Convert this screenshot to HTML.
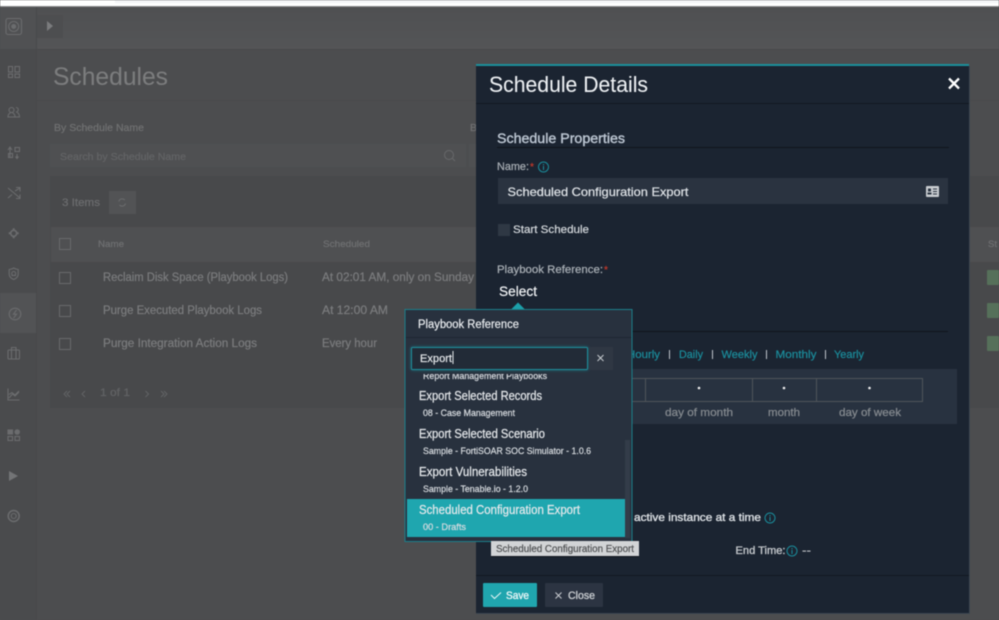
<!DOCTYPE html>
<html><head><meta charset="utf-8"><title>Schedules</title>
<style>
html,body{margin:0;padding:0;background:#4c4d4f;width:999px;height:620px;overflow:hidden}
svg{display:block;filter:blur(.4px)}
text{font-family:"Liberation Sans",sans-serif;white-space:pre;fill:currentColor;stroke:currentColor;stroke-width:.22px}
.ic{fill:none;stroke:#6b6c6e;stroke-width:1.1}
.bg text{color:#7b7c7e}
.l{color:#1b8c9b;font-size:11px}
.pt{color:#e6e9ec;font-size:12.5px}
.ps{color:#d8dce0;font-size:9.5px}
.thin{stroke-width:.05px}
</style></head><body>
<svg width="999" height="620" viewBox="0 0 999 620" xmlns="http://www.w3.org/2000/svg">
<defs>
<linearGradient id="hd" x1="0" y1="0" x2="0" y2="1"><stop offset="0" stop-color="#4f5052"/><stop offset="1" stop-color="#545557"/></linearGradient>
<clipPath id="lc"><rect x="407" y="374" width="218" height="170"/></clipPath>
<filter id="glow" x="-10%" y="-40%" width="120%" height="180%"><feGaussianBlur stdDeviation="1.5"/></filter>
</defs>
<!-- page -->
<rect width="999" height="620" fill="#4c4d4f"/>
<rect width="999" height="6" fill="#ffffff"/>
<rect x="115" y="0" width="884" height="3" fill="#f4f5f7"/>
<rect y="6" width="999" height="1" fill="#8a8b8d"/>
<rect y="7" width="999" height="42" fill="url(#hd)"/>
<rect y="49" width="999" height="1" fill="#48494b"/>
<rect x="36" y="7" width="1" height="613" fill="#48494b"/>
<rect y="7" width="36" height="613" fill="#4a4b4d"/>
<rect y="7" width="36" height="42" fill="#505153"/>
<rect x="37" y="15" width="26" height="23" fill="#4d4e50"/>
<path d="M47 21 L53 26 L47 31Z" fill="#7b7c7e"/>
<rect x="0" y="293" width="36" height="40" fill="#525355"/>
<rect y="100" x="37" width="962" height="1" fill="#49494b"/>

<!-- sidebar icons -->
<g class="ic">
<rect x="6" y="18.500" width="15.500" height="16" rx="2"/><circle cx="13.700" cy="26.500" r="5"/><circle cx="13.700" cy="26.500" r="2" fill="#6b6c6e"/>
<rect x="8.500" y="66.500" width="4" height="5.500"/><rect x="15" y="66.500" width="4.500" height="5.500"/><rect x="8.500" y="74" width="4" height="3.500"/><rect x="15" y="74" width="4.500" height="3.500"/>
<circle cx="11.500" cy="110" r="2.500"/><path d="M8 117c0-3 2-4.500 3.500-4.500s3.500 1.500 3.500 4.500zM16 107.500a2.200 2.200 0 1 1 0 4.500M17 112.500c1.500.5 2.500 2 2.500 4.500H15"/>
<path d="M10 158v-10M8 150l2-3 2 3"/><rect x="15" y="147.500" width="4.500" height="4"/><rect x="8.500" y="153.500" width="4" height="4"/><path d="M17 154v4M15.500 156.500l1.500 2 1.500-2"/>
<path d="M8 188l12 10M8 198l4-3.500M15 191l5-3M16 187.500h4v4M16 198.500h4v-4"/>
<circle cx="13.700" cy="233.300" r="3" stroke-width="1.600"/><path d="M13.700 228.300v1.500M13.700 236.800v1.500M8.700 233.300h1.500M17.200 233.300h1.500" stroke-width="2"/>
<path d="M13.700 268c2 1.200 3.800 1.500 4.500 1.500v4.500c0 2.700-2 4.500-4.500 5.500-2.500-1-4.500-2.800-4.500-5.500v-4.500c.7 0 2.500-.3 4.500-1.500z"/><circle cx="13.700" cy="273.500" r="2"/><path d="M11.500 275.500h4.500"/>
<circle cx="15" cy="314" r="5.800"/><path d="M16.500 310l-3 4.200h3l-3 4"/>
<rect x="8" y="350" width="11.500" height="9" rx="1"/><path d="M11.500 350v-2.500h4.500v2.500M11.500 350v9M16 350v9"/>
<path d="M8 388.500v11.500h11.500M9 398l3.500-4 2.500 2 4-4M9 394.500l3-2 3 2.500 4-4"/>
<rect x="8" y="430" width="4.500" height="4" fill="#6b6c6e"/><circle cx="17.200" cy="432" r="2.200" fill="#6b6c6e"/><rect x="8" y="436.500" width="4.500" height="4"/><rect x="15" y="436.500" width="4.500" height="4"/>
<path d="M9 471l9 5-9 5z" fill="#737476" stroke="none"/>
<circle cx="13.700" cy="516" r="5.500" stroke-width="1.500"/><circle cx="13.700" cy="516" r="2.500"/>
</g>

<!-- list page -->
<g class="bg">
<text class="thin" x="53" y="85" font-size="25" textLength="115" lengthAdjust="spacingAndGlyphs" style="color:#7c7d7e">Schedules</text>
<text x="54" y="131" font-size="10.500" textLength="90" lengthAdjust="spacingAndGlyphs" style="color:#707172">By Schedule Name</text>
<text x="470" y="131" font-size="10.500" style="color:#707172">B</text>
<rect x="50" y="144" width="416" height="23" fill="#4f5052"/>
<rect x="469" y="144" width="8" height="23" fill="#4f5052"/>
<text x="60" y="160" font-size="10.500" textLength="126" lengthAdjust="spacingAndGlyphs" style="color:#636466">Search by Schedule Name</text>
<circle cx="449" cy="155" r="4.500" fill="none" stroke="#68696b"/><path d="M452.500 158.500l2.500 2.500" stroke="#68696b"/>
<rect x="50" y="176" width="949" height="232" fill="#48494b"/>
<text x="62" y="206" font-size="11" textLength="38" lengthAdjust="spacingAndGlyphs" style="color:#6c6d6f">3 Items</text>
<rect x="109" y="191" width="27" height="23" fill="#525355"/>
<path d="M118.800 201.500a3.500 3.500 0 0 1 6-1.500M125.500 203.500a3.500 3.500 0 0 1-6 1.500" fill="none" stroke="#6c6d6f"/>
<rect x="51" y="227" width="948" height="35" fill="#4f5052"/>
<rect x="59.500" y="238.500" width="11" height="11" fill="none" stroke="#68696b"/>
<text x="98" y="247" font-size="9.500" textLength="26" lengthAdjust="spacingAndGlyphs" style="color:#6f7072">Name</text>
<text x="323" y="247" font-size="9.500" textLength="47" lengthAdjust="spacingAndGlyphs" style="color:#6f7072">Scheduled</text>
<text x="988" y="247" font-size="9.500" style="color:#6f7072">St</text>
<rect x="59.500" y="272.500" width="11" height="11" fill="none" stroke="#68696b"/>
<text x="103" y="281" font-size="11.500" textLength="185" lengthAdjust="spacingAndGlyphs">Reclaim Disk Space (Playbook Logs)</text>
<text x="322" y="281" font-size="11.500" textLength="152" lengthAdjust="spacingAndGlyphs">At 02:01 AM, only on Sunday</text>
<rect x="59.500" y="305.500" width="11" height="11" fill="none" stroke="#68696b"/>
<text x="103" y="314" font-size="11.500" textLength="159" lengthAdjust="spacingAndGlyphs">Purge Executed Playbook Logs</text>
<text x="322" y="314" font-size="11.500" textLength="66" lengthAdjust="spacingAndGlyphs">At 12:00 AM</text>
<rect x="59.500" y="338.500" width="11" height="11" fill="none" stroke="#68696b"/>
<text x="103" y="347" font-size="11.500" textLength="154" lengthAdjust="spacingAndGlyphs">Purge Integration Action Logs</text>
<text x="322" y="347" font-size="11.500" textLength="55" lengthAdjust="spacingAndGlyphs">Every hour</text>
<rect x="987" y="270" width="12" height="15" rx="1" fill="#56705a"/>
<rect x="987" y="303" width="12" height="15" rx="1" fill="#56705a"/>
<rect x="987" y="336" width="12" height="15" rx="1" fill="#56705a"/>
<text x="100" y="396" font-size="11" textLength="30" lengthAdjust="spacingAndGlyphs" style="color:#626365">1 of 1</text>
<path d="M67 391l-3 3 3 3M70 391l-3 3 3 3M85 391l-3 3 3 3M145.500 391l3 3-3 3M161 391l3 3-3 3M164 391l3 3-3 3" fill="none" stroke="#626365"/>
</g>

<!-- modal -->
<rect x="476" y="64" width="493" height="549" fill="#1b2431"/>
<rect x="476" y="64" width="493" height="2" fill="#1b8f9a"/>
<rect x="969" y="66" width="1" height="548" fill="#3c4650"/>
<rect x="476" y="613" width="494" height="1" fill="#3c4650"/>
<rect x="476" y="103" width="493" height="1" fill="#121821"/>
<text class="thin" x="489" y="92" font-size="22" color="#eef1f4" textLength="159" lengthAdjust="spacingAndGlyphs">Schedule Details</text>
<path d="M949 78.500l10 10M959 78.500l-10 10" stroke="#fff" stroke-width="2.300" fill="none"/>
<text x="497" y="143" font-size="13.500" color="#bcc6d2" style="stroke-width:.4px" textLength="128" lengthAdjust="spacingAndGlyphs">Schedule Properties</text>
<rect x="497" y="147" width="452" height="1" fill="#10151c"/>
<text x="497" y="170" font-size="11" color="#aab0b6" textLength="32" lengthAdjust="spacingAndGlyphs">Name:</text>
<text x="530" y="170" font-size="10" color="#c0392b">*</text>
<circle cx="543.500" cy="167" r="5" fill="none" stroke="#1b8c9b"/><path d="M543.500 166v4M543.500 164v1.200" stroke="#1b8c9b"/>
<rect x="498" y="178" width="450" height="26" fill="#2a3340"/>
<text x="507.500" y="196" font-size="12" color="#e0e4e8" textLength="181" lengthAdjust="spacingAndGlyphs">Scheduled Configuration Export</text>
<rect x="926" y="186" width="13" height="11" rx="1" fill="#c8ccd0"/>
<path d="M933 189h4M933 191.500h4M933 194h4" stroke="#2a3340"/><rect x="928" y="188.500" width="3" height="3" fill="#2a3340"/><rect x="927.500" y="192.500" width="4" height="2" fill="#2a3340"/>
<rect x="498" y="224" width="12" height="12" fill="#2f3844"/>
<text x="513" y="233" font-size="11" color="#d4d8dc" textLength="76" lengthAdjust="spacingAndGlyphs">Start Schedule</text>
<text x="497" y="273" font-size="11" color="#aab0b6" textLength="106" lengthAdjust="spacingAndGlyphs">Playbook Reference:</text>
<text x="604" y="273" font-size="10" color="#c0392b">*</text>
<text x="499" y="296" font-size="14" color="#f2f4f6" textLength="38" lengthAdjust="spacingAndGlyphs">Select</text>
<rect x="497" y="331" width="451" height="1" fill="#10151c"/>
<text class="l" x="627" y="358" textLength="33" lengthAdjust="spacingAndGlyphs">Hourly</text>
<text class="l" x="679" y="358" textLength="24" lengthAdjust="spacingAndGlyphs">Daily</text>
<text class="l" x="721.500" y="358" textLength="36" lengthAdjust="spacingAndGlyphs">Weekly</text>
<text class="l" x="775.500" y="358" textLength="41" lengthAdjust="spacingAndGlyphs">Monthly</text>
<text class="l" x="834" y="358" textLength="30" lengthAdjust="spacingAndGlyphs">Yearly</text>
<path d="M669.500 350v9M712.500 350v9M766.500 350v9M825.500 350v9" stroke="#c0c6cc"/>
<rect x="620" y="369" width="337" height="55" fill="#283240"/>
<path d="M625 378.500h20M645.500 378v24M645.500 378.500h107v23h-107M752.500 378v24M752.500 378.500h64v23h-64M816.500 378v24M816.500 378.500h106v23h-106M625 401.500h20" fill="none" stroke="#50555a"/>
<circle cx="699" cy="388" r="1.300" fill="#f0f0f0"/><circle cx="784" cy="388" r="1.300" fill="#f0f0f0"/><circle cx="869.500" cy="388" r="1.300" fill="#f0f0f0"/>
<text x="665" y="416" font-size="11" color="#868b90" textLength="68" lengthAdjust="spacingAndGlyphs">day of month</text>
<text x="768" y="416" font-size="11" color="#868b90" textLength="32" lengthAdjust="spacingAndGlyphs">month</text>
<text x="839" y="416" font-size="11" color="#868b90" textLength="62" lengthAdjust="spacingAndGlyphs">day of week</text>
<text x="634" y="521" font-size="11" color="#dde1e5" style="stroke-width:.35px" textLength="127" lengthAdjust="spacingAndGlyphs">active instance at a time</text>
<circle cx="770" cy="518" r="5" fill="none" stroke="#1b8c9b"/><path d="M770 517v4M770 515v1.200" stroke="#1b8c9b"/>
<text x="735.500" y="554" font-size="11" color="#c4c8cc" style="stroke-width:.35px" textLength="50" lengthAdjust="spacingAndGlyphs">End Time:</text>
<circle cx="792" cy="551" r="5" fill="none" stroke="#1b8c9b"/><path d="M792 550v4M792 548v1.200" stroke="#1b8c9b"/>
<text x="802" y="554" font-size="11" color="#c4c8cc" textLength="9" lengthAdjust="spacingAndGlyphs">--</text>
<rect x="476" y="575" width="493" height="1" fill="#121821"/>
<rect x="483" y="583" width="54" height="24" rx="1" fill="#20a5ae"/>
<path d="M491 595l3.500 3.500 6.500-6" fill="none" stroke="#e8f6f7" stroke-width="1"/>
<text x="506" y="599" font-size="11" color="#e8f6f7" style="stroke-width:.35px" textLength="23" lengthAdjust="spacingAndGlyphs">Save</text>
<rect x="545" y="583" width="58" height="24" rx="1" fill="#2c3442"/>
<path d="M555.500 592.500l6 6M561.500 592.500l-6 6" stroke="#c8ccd0" fill="none"/>
<text x="568" y="599" font-size="11" color="#c8ccd0" style="stroke-width:.35px" textLength="27" lengthAdjust="spacingAndGlyphs">Close</text>

<!-- popover -->
<path d="M511 309.500l7-7 7 7z" fill="#1ca0aa"/>
<rect x="405" y="309.500" width="227" height="232" fill="#28313e" stroke="#1c7f8a"/>
<text x="418" y="328" font-size="11.500" color="#e8ebee" textLength="101" lengthAdjust="spacingAndGlyphs">Playbook Reference</text>
<rect x="406" y="337" width="225" height="1" fill="#1e2632"/>
<rect x="411" y="347" width="177" height="23" fill="#1c8f9c" filter="url(#glow)" opacity=".7"/>
<rect x="589" y="347" width="24" height="23" fill="#2f3743"/>
<path d="M597.500 355l6 6M603.500 355l-6 6" stroke="#c8ccd0" fill="none"/>
<rect x="411.500" y="347.500" width="176" height="22" rx="1" fill="#222b37" stroke="#1f8f9c"/>
<text x="420" y="362" font-size="11" color="#e4e7ea" textLength="32" lengthAdjust="spacingAndGlyphs">Export</text>
<rect x="452.500" y="351" width="1" height="13" fill="#e4e7ea"/>
<g clip-path="url(#lc)">
<text class="ps" x="423" y="379" textLength="124" lengthAdjust="spacingAndGlyphs">Report Management Playbooks</text>
</g>
<text class="pt" x="419" y="400" textLength="123" lengthAdjust="spacingAndGlyphs">Export Selected Records</text>
<text class="ps" x="423" y="416" textLength="92" lengthAdjust="spacingAndGlyphs">08 - Case Management</text>
<text class="pt" x="419" y="438" textLength="126" lengthAdjust="spacingAndGlyphs">Export Selected Scenario</text>
<text class="ps" x="423" y="454" textLength="168" lengthAdjust="spacingAndGlyphs">Sample - FortiSOAR SOC Simulator - 1.0.6</text>
<text class="pt" x="419" y="476" textLength="108" lengthAdjust="spacingAndGlyphs">Export Vulnerabilities</text>
<text class="ps" x="423" y="492" textLength="105" lengthAdjust="spacingAndGlyphs">Sample - Tenable.io - 1.2.0</text>
<rect x="625" y="440" width="5" height="98" fill="#333c49"/>
<rect x="407" y="499" width="218" height="38" fill="#1fa6af"/>
<text class="pt" x="419" y="514" textLength="161" lengthAdjust="spacingAndGlyphs">Scheduled Configuration Export</text>
<text class="ps" x="423" y="530" textLength="43" lengthAdjust="spacingAndGlyphs">00 - Drafts</text>

<!-- tooltip -->
<rect x="491" y="541" width="148" height="15.500" fill="#d2d4d6"/>
<rect x="491" y="556" width="148" height="1" fill="#11161d"/>
<text x="496" y="552" font-size="10" color="#505254" textLength="138" lengthAdjust="spacingAndGlyphs">Scheduled Configuration Export</text>
</svg>
</body></html>
